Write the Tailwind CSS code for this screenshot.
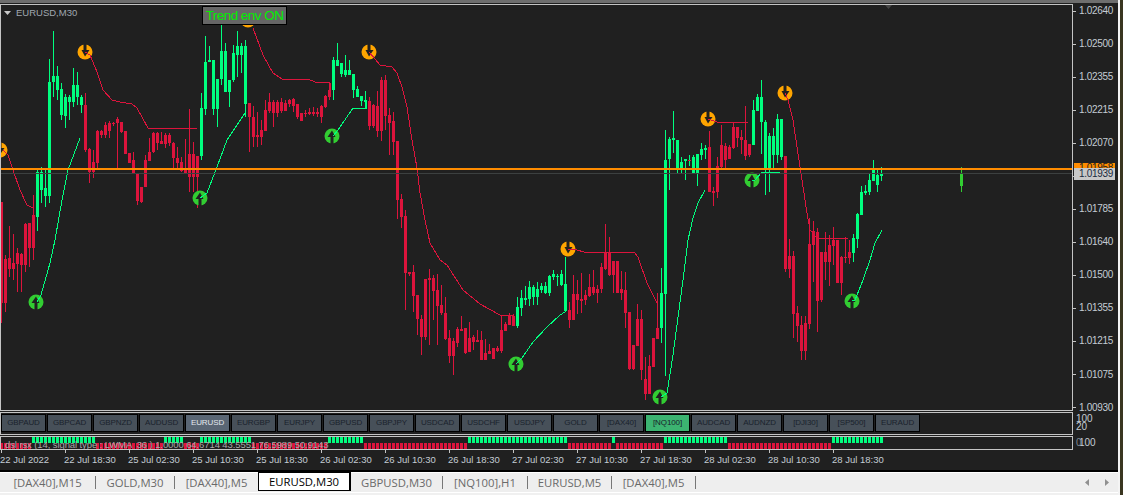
<!DOCTYPE html>
<html>
<head>
<meta charset="utf-8">
<script src="https://cdn.jsdelivr.net/npm/@tailwindcss/browser@4"></script>
</head>
<body class="w-[1123px] h-[495px] overflow-hidden bg-[#3a3620] font-['Liberation_Sans',sans-serif]">
<div class="flex h-[495px]">
  <div class="w-[1118px] flex flex-col">
    <div class="h-[3px] bg-[#6e6e6e]"></div>
    <div class="h-[467px] bg-[#202020] flex flex-col pt-px">
      <!-- main pane + price axis -->
      <div class="flex h-[407px]">
        <div class="relative w-[1073px] h-[407px] border border-[#c4c4c4] overflow-hidden">
          <svg class="block w-[1071px] h-[405px]" viewBox="1 5 1071 405" fill="none">
            <defs>
              <g id="dn"><circle r="7.5" fill="#ffa500"/><path d="M-1.5-8h3v6h3L0 4.500-3.500-2h2z" fill="#202020"/></g>
              <g id="up"><circle r="7.500" fill="#32cd32"/><path d="M-1.500 8v-7h-3L0-5.500 3.500 1h-2v7z" fill="#202020"/></g>
            </defs>
            <!-- green wicks -->
            <path shape-rendering="crispEdges" stroke="#00ff7f" d="M37.500 168V231M41.500 167V203M45.500 168V207M49.500 59V203M53.500 31V97M57.500 66V100M61.500 83V120M65.500 94V128M69.500 95V120M73.500 68V107M77.500 72V105M81.500 95V113M201.500 93V160M205.500 36V115M209.500 46V62M213.500 60V115M217.500 79V127M221.500 25V85M225.500 43V92M229.500 80V107M233.500 45V82M237.500 31V77M241.500 43V73M245.500 40V117M333.500 57V100M337.500 43V66M341.500 63V77M345.500 55V77M349.500 60V75M353.500 74V98M357.500 86V97M361.500 96V106M365.500 91V108M517.500 297V328M521.500 290V316M525.500 286V305M529.500 281V306M533.500 285V305M537.500 282V305M541.500 283V293M545.500 282V294M549.500 275V296M553.500 270V280M557.500 274V286M561.500 270V286M565.500 257V312M661.500 268V343M665.500 130V376M669.500 137V190M673.500 111V153M677.500 140V173M681.500 157V173M685.500 159V180M689.500 155V166M693.500 155V173M697.500 154V186M701.500 143V160M705.500 145V159M753.500 100V145M757.500 94V111M761.500 80V154M765.500 120V195M769.500 133V192M773.500 128V169M777.500 114V163M781.500 119V160M853.500 234V262M857.500 213V248M861.500 186V215M865.500 185V195M869.500 174V195M873.500 160V181M877.500 170V192M881.500 167V181"/>
            <!-- green bodies -->
            <path shape-rendering="crispEdges" stroke="#00ff7f" stroke-width="3" d="M37.500 172V217M41.500 172V190M45.500 188V196M49.500 82V196M53.500 76V82M57.500 76V90M61.500 89V115M65.500 97V116M69.500 97V102M73.500 85V102M77.500 85V97M81.500 97V105M201.500 108V156M205.500 62V109M209.500 60V62M213.500 60V109M217.500 79V109M221.500 51V79M225.500 51V92M229.500 80V92M233.500 53V80M237.500 46V55M241.500 46V55M245.500 46V104M333.500 60V90M337.500 60V66M341.500 63V74M345.500 70V75M349.500 70V75M353.500 74V90M357.500 89V97M361.500 96V101M365.500 100V102M517.500 307V326M521.500 298V308M525.500 298V300M529.500 287V299M533.500 287V297M537.500 289V297M541.500 286V290M545.500 286V293M549.500 276V293M553.500 274V277M557.500 276V277M561.500 274V285M565.500 284V311M661.500 293V328M665.500 160V294M669.500 139V159M673.500 138V140M677.500 140V169M681.500 162V169M685.500 159V161M693.500 157V173M697.500 154V173M701.500 149V155M705.500 148V150M753.500 110V145M757.500 97V111M761.500 97V122M765.500 122V170M769.500 136V170M773.500 136V155M777.500 119V155M781.500 119V157M853.500 238V253M857.500 214V239M861.500 192V215M865.500 191V193M869.500 180V192M873.500 168V181M877.500 175V185M881.500 173V176"/>
            <!-- red wicks -->
            <path shape-rendering="crispEdges" stroke="#dc143c" d="M1.500 202V323M5.500 255V312M9.500 226V277M13.500 234V280M17.500 248V292M21.500 253V292M25.500 223V272M29.500 223V267M33.500 195V260M85.500 93V152M89.500 148V183M93.500 150V178M97.500 130V170M101.500 130V138M105.500 122V138M109.500 121V138M113.500 122V126M117.500 117V168M121.500 122V133M125.500 131V154M129.500 153V163M133.500 152V174M137.500 173V205M141.500 187V203M145.500 155V187M149.500 138V161M153.500 132V153M157.500 132V150M161.500 132V144M165.500 133V148M169.500 133V146M173.500 142V169M177.500 147V168M181.500 157V172M185.500 139V173M189.500 109V192M193.500 142V192M197.500 156V208M249.500 103V152M253.500 106V147M257.500 112V147M261.500 120V145M265.500 100V131M269.500 93V113M273.500 100V127M277.500 100V117M281.500 98V113M285.500 100V111M289.500 99V107M293.500 98V112M297.500 104V119M301.500 113V121M305.500 110V117M309.500 108V115M313.500 107V116M317.500 108V117M321.500 105V123M325.500 95V108M329.500 82V100M369.500 97V130M373.500 104V128M377.500 91V137M381.500 77V141M385.500 75V130M389.500 108V155M393.500 112V155M397.500 141V219M401.500 194V228M405.500 210V310M409.500 272V276M413.500 265V312M417.500 295V335M421.500 315V355M425.500 279V340M429.500 269V345M433.500 275V320M437.500 274V345M441.500 285V315M445.500 297V340M449.500 330V363M453.500 338V375M457.500 327V347M461.500 316V331M465.500 328V354M469.500 322V352M473.500 335V350M477.500 330V342M481.500 331V360M485.500 339V360M489.500 344V354M493.500 348V359M497.500 346V352M501.500 315V353M505.500 322V331M509.500 313V325M513.500 314V326M569.500 302V328M573.500 275V320M577.500 280V314M581.500 273V313M585.500 290V305M589.500 274V297M593.500 270V295M597.500 285V303M601.500 263V293M605.500 224V270M609.500 237V276M613.500 261V293M617.500 261V293M621.500 271V300M625.500 272V328M629.500 312V370M633.500 345V370M637.500 304V346M641.500 310V380M645.500 357V400M649.500 355V394M653.500 338V367M657.500 293V339M709.500 131V192M713.500 187V206M717.500 157V198M721.500 125V170M725.500 143V169M729.500 145V159M733.500 122V149M737.500 127V147M741.500 130V154M745.500 106V160M749.500 144V157M785.500 156V272M789.500 239V278M793.500 251V338M797.500 306V342M801.500 316V360M805.500 316V360M809.500 218V329M813.500 221V282M817.500 228V332M821.500 252V302M825.500 232V280M829.500 235V286M833.500 227V265M837.500 240V283M841.500 256V295M845.500 237V263M849.500 240V264"/>
            <!-- red bodies -->
            <path shape-rendering="crispEdges" stroke="#dc143c" stroke-width="3" d="M1.500 202V303M5.500 259V303M9.500 258V269M13.500 263V269M17.500 253V264M21.500 254V265M25.500 224V265M29.500 223V248M33.500 215V248M85.500 105V150M89.500 149V172M93.500 162V172M97.500 131V163M101.500 131V135M105.500 125V135M109.500 123V131M113.500 123V124M117.500 119V123M121.500 122V132M125.500 131V154M129.500 153V163M133.500 160V174M137.500 173V201M141.500 187V202M145.500 160V187M149.500 152V161M153.500 133V152M157.500 133V143M161.500 141V144M165.500 135V144M169.500 135V143M173.500 143V158M177.500 158V163M181.500 162V171M185.500 168V173M189.500 154V177M193.500 154V177M197.500 156V177M249.500 103V117M253.500 117V137M257.500 135V137M261.500 130V137M265.500 110V131M269.500 102V111M273.500 102V113M277.500 102V113M281.500 102V111M285.500 103V111M289.500 100V104M293.500 99V106M297.500 104V117M301.500 113V121M305.500 113V114M309.500 112V114M313.500 112V114M317.500 112V114M321.500 106V117M325.500 96V107M329.500 90V97M369.500 101V126M373.500 105V126M377.500 106V131M381.500 80V131M385.500 80V116M389.500 115V123M393.500 121V142M397.500 141V200M401.500 199V217M405.500 216V273M409.500 272V274M413.500 272V296M417.500 295V319M421.500 319V337M425.500 279V337M429.500 278V280M433.500 278V291M437.500 290V306M441.500 305V313M445.500 313V339M449.500 338V356M453.500 341V356M457.500 329V343M461.500 329V331M465.500 328V353M469.500 338V352M473.500 337V342M477.500 340V342M481.500 340V360M485.500 353V360M489.500 351V354M493.500 348V359M497.500 348V351M501.500 330V351M505.500 324V331M509.500 315V325M513.500 316V326M569.500 310V320M573.500 294V320M577.500 294V300M581.500 299V301M585.500 295V300M589.500 287V296M593.500 287V293M597.500 289V293M601.500 267V289M605.500 253V269M609.500 253V275M613.500 261V275M617.500 261V293M621.500 289V293M625.500 290V313M629.500 312V369M633.500 345V369M637.500 319V346M641.500 319V370M645.500 379V394M649.500 366V394M653.500 338V367M657.500 328V339M689.500 160V161M709.500 147V192M713.500 191V193M717.500 166V192M721.500 145V167M725.500 146V160M729.500 147V159M733.500 127V148M737.500 127V138M741.500 137V140M745.500 140V156M749.500 144V155M785.500 156V269M789.500 256V269M793.500 256V314M797.500 313V326M801.500 325V351M805.500 323V351M809.500 244V324M813.500 231V245M817.500 232V301M821.500 252V300M825.500 252V262M829.500 245V262M833.500 240V246M837.500 240V283M841.500 257V283M845.500 257V258M849.500 252V258"/>
            <!-- arrows -->
            <use href="#dn" x="85" y="52"/><use href="#dn" x="369" y="52"/><use href="#dn" x="708" y="119"/><use href="#dn" x="785" y="93"/><use href="#dn" x="568" y="249"/><use href="#dn" x="0" y="150"/><use href="#dn" x="248" y="20"/>
            <use href="#up" x="36" y="302"/><use href="#up" x="200" y="198"/><use href="#up" x="332" y="136"/><use href="#up" x="516" y="364"/><use href="#up" x="660" y="397"/><use href="#up" x="752" y="180"/><use href="#up" x="852" y="301"/>
            <!-- trailing lines -->
            <g stroke="#dc143c" stroke-width="1" shape-rendering="crispEdges">
              <path d="M3 150L8 155L13 170L20 190L27 205L33 208"/>
              <path d="M85 52L90 55L97 72L103 90L112 100L120 102L132 104L137 108L148 128H197"/>
              <path d="M253 28L263 55L273 73L282 79H308L315 82L330 83V90"/>
              <path d="M369 52L375 59L380 65L392 67L397 73L402 87L407 107L412 140L417 168L420 193L425 220L430 243L440 260L447 265L463 290L480 304L500 315H513"/>
              <path d="M568 249L577 250L584 252H634L638 257L647 283L657 303"/>
              <path d="M708 119L717 122H748"/>
              <path d="M785 93L788 100L793 120L800 167L807 213L810 230L817 238H848"/>
            </g>
            <g stroke="#00ff7f" stroke-width="1" shape-rendering="crispEdges">
              <path d="M37 302L41 295L50 263L55 240L62 200L68 170L80 138"/>
              <path d="M200 198L207 193L217 167L227 140L245 113"/>
              <path d="M333 136L338 130L353 108H366V100"/>
              <path d="M516 364L522 358L533 342L547 327L560 315L565 312"/>
              <path d="M661 397L667 393L673 355L683 280L688 240L693 218L698 203L705 190"/>
              <path d="M752 180L755 180L762 172H780"/>
              <path d="M852 301L855 300L863 280L870 260L875 243L882 230"/>
            </g>
            <!-- future candle and shift marker -->
            <path shape-rendering="crispEdges" stroke="#32cd32" d="M961.500 167V192"/>
            <path shape-rendering="crispEdges" stroke="#32cd32" stroke-width="3" d="M961.500 173V186"/>
            <path d="M885 5H892L888.500 9z" fill="#444"/>
          </svg>
          <div class="absolute left-0 right-0 top-[163px] h-[2px] bg-[#ff8c00]"></div>
          <div class="absolute left-0 right-0 top-[168px] h-px bg-[#3c4040]"></div>
          <div class="absolute left-[3px] top-[3px] flex items-center gap-[5px]">
            <svg class="w-[7px] h-[4px]" viewBox="0 0 7 4"><path d="M0 0H7L3.500 4z" fill="#c8c8c8"/></svg>
            <span class="text-[9.500px] leading-none text-[#a0a8b0]">EURUSD,M30</span>
          </div>
          <div class="absolute left-[201px] top-[1px] w-[85px] h-[19px] bg-[#666666] border border-black flex items-center justify-center text-[13.500px] tracking-[-0.550px] whitespace-nowrap text-[#00f000] leading-none">Trend env ON</div>
        </div>
        <div class="relative flex-1 flex flex-col gap-[21.050px] pt-px text-[10px] tracking-[-0.3px] leading-[12px] text-[#c4ccd4]">
          <div class="flex items-center h-3"><span class="w-[3px] h-px bg-[#c4c4c4] mr-[3px]"></span>1.02640</div>
          <div class="flex items-center h-3"><span class="w-[3px] h-px bg-[#c4c4c4] mr-[3px]"></span>1.02500</div>
          <div class="flex items-center h-3"><span class="w-[3px] h-px bg-[#c4c4c4] mr-[3px]"></span>1.02355</div>
          <div class="flex items-center h-3"><span class="w-[3px] h-px bg-[#c4c4c4] mr-[3px]"></span>1.02215</div>
          <div class="flex items-center h-3"><span class="w-[3px] h-px bg-[#c4c4c4] mr-[3px]"></span>1.02070</div>
          <div class="flex items-center h-3"><span class="w-[3px] h-px bg-[#c4c4c4] mr-[3px]"></span>1.01925</div>
          <div class="flex items-center h-3"><span class="w-[3px] h-px bg-[#c4c4c4] mr-[3px]"></span>1.01785</div>
          <div class="flex items-center h-3"><span class="w-[3px] h-px bg-[#c4c4c4] mr-[3px]"></span>1.01640</div>
          <div class="flex items-center h-3"><span class="w-[3px] h-px bg-[#c4c4c4] mr-[3px]"></span>1.01500</div>
          <div class="flex items-center h-3"><span class="w-[3px] h-px bg-[#c4c4c4] mr-[3px]"></span>1.01355</div>
          <div class="flex items-center h-3"><span class="w-[3px] h-px bg-[#c4c4c4] mr-[3px]"></span>1.01215</div>
          <div class="flex items-center h-3"><span class="w-[3px] h-px bg-[#c4c4c4] mr-[3px]"></span>1.01075</div>
          <div class="flex items-center h-3"><span class="w-[3px] h-px bg-[#c4c4c4] mr-[3px]"></span>1.00930</div>
          <div class="absolute left-px top-[159px] w-[41px] h-[5px] bg-[#ff8c00] text-[#202020] pl-[5px] overflow-hidden leading-[10px]">1.01958</div>
          <div class="absolute left-px top-[164px] w-[41px] h-[12px] bg-[#c8c8c8] text-[#1a2a40] pl-[5px] leading-[12px]">1.01939</div>
        </div>
      </div>
      <!-- button pane -->
      <div class="flex h-[23px] mt-px">
        <div class="w-[1073px] h-[23px] border border-[#c4c4c4] flex gap-px pt-px text-[8px] leading-none tracking-[-0.1px] text-[#1a222c]">
          <div class="w-[45px] h-[18px] shrink-0 flex items-center justify-center bg-[#475059] border border-black">GBPAUD</div>
          <div class="w-[45px] h-[18px] shrink-0 flex items-center justify-center bg-[#475059] border border-black">GBPCAD</div>
          <div class="w-[45px] h-[18px] shrink-0 flex items-center justify-center bg-[#475059] border border-black">GBPNZD</div>
          <div class="w-[45px] h-[18px] shrink-0 flex items-center justify-center bg-[#475059] border border-black">AUDUSD</div>
          <div class="w-[45px] h-[18px] shrink-0 flex items-center justify-center bg-[#5a6674] border border-black text-[#e4e8ee]">EURUSD</div>
          <div class="w-[45px] h-[18px] shrink-0 flex items-center justify-center bg-[#475059] border border-black">EURGBP</div>
          <div class="w-[45px] h-[18px] shrink-0 flex items-center justify-center bg-[#475059] border border-black">EURJPY</div>
          <div class="w-[45px] h-[18px] shrink-0 flex items-center justify-center bg-[#475059] border border-black">GBPUSD</div>
          <div class="w-[45px] h-[18px] shrink-0 flex items-center justify-center bg-[#475059] border border-black">GBPJPY</div>
          <div class="w-[45px] h-[18px] shrink-0 flex items-center justify-center bg-[#475059] border border-black">USDCAD</div>
          <div class="w-[45px] h-[18px] shrink-0 flex items-center justify-center bg-[#475059] border border-black">USDCHF</div>
          <div class="w-[45px] h-[18px] shrink-0 flex items-center justify-center bg-[#475059] border border-black">USDJPY</div>
          <div class="w-[45px] h-[18px] shrink-0 flex items-center justify-center bg-[#475059] border border-black">GOLD</div>
          <div class="w-[45px] h-[18px] shrink-0 flex items-center justify-center bg-[#475059] border border-black">[DAX40]</div>
          <div class="w-[45px] h-[18px] shrink-0 flex items-center justify-center bg-[#3cb371] border border-black">[NQ100]</div>
          <div class="w-[45px] h-[18px] shrink-0 flex items-center justify-center bg-[#475059] border border-black">AUDCAD</div>
          <div class="w-[45px] h-[18px] shrink-0 flex items-center justify-center bg-[#475059] border border-black">AUDNZD</div>
          <div class="w-[45px] h-[18px] shrink-0 flex items-center justify-center bg-[#475059] border border-black">[DJI30]</div>
          <div class="w-[45px] h-[18px] shrink-0 flex items-center justify-center bg-[#475059] border border-black">[SP500]</div>
          <div class="w-[45px] h-[18px] shrink-0 flex items-center justify-center bg-[#475059] border border-black">EURAUD</div>
        </div>
        <div class="relative flex-1 pl-[3px] text-[10px] leading-[8px] text-[#c4ccd4] pt-[3px]">
          <div>100</div>
          <div>20</div>
        </div>
      </div>
      <!-- indicator pane -->
      <div class="flex h-[14px] mt-px">
        <div class="relative w-[1073px] h-[14px] border border-[#c4c4c4] overflow-hidden">
          <svg class="block w-[1071px] h-[12px]" viewBox="1 437 1071 12" fill="none" shape-rendering="crispEdges">
            <path stroke="#00ff7f" stroke-width="6" stroke-dasharray="3 1" d="M32 440H96M164 440H184M200 440H252M328 440H364M468 440H568M612 440H616M664 440H728M832 440H884"/>
            <path stroke="#dc143c" stroke-width="6" stroke-dasharray="3 1" d="M0 446H32M96 446H164M184 446H200M252 446H328M364 446H468M568 446H612M616 446H664M728 446H832"/>
          </svg>
          <div class="absolute left-[4px] top-[3px] text-[9.500px] tracking-[-0.1px] leading-[10px] whitespace-pre text-[#a8a8a8]">dsl rsx (14, signal type : LWMA  36 ) 1.0000 64.6714 43.5551 76.5989 50.9143</div>
        </div>
        <div class="relative flex-1 pl-[6px] text-[10px] leading-[14px] text-[#c4ccd4]">
          <span class="absolute left-[3px] top-0 text-[#808890]">0</span>
          <span>100</span>
        </div>
      </div>
      <!-- time axis -->
      <div class="flex pl-px text-[9.500px] leading-none text-[#c4ccd4]">
        <div class="w-[64px] shrink-0"><div class="w-px h-[3px] bg-[#c4c4c4]"></div><div class="mt-[2px] -ml-px">22 Jul 2022</div></div>
        <div class="w-[64px] shrink-0"><div class="w-px h-[3px] bg-[#c4c4c4]"></div><div class="mt-[2px] -ml-px">22 Jul 18:30</div></div>
        <div class="w-[64px] shrink-0"><div class="w-px h-[3px] bg-[#c4c4c4]"></div><div class="mt-[2px] -ml-px">25 Jul 02:30</div></div>
        <div class="w-[64px] shrink-0"><div class="w-px h-[3px] bg-[#c4c4c4]"></div><div class="mt-[2px] -ml-px">25 Jul 10:30</div></div>
        <div class="w-[64px] shrink-0"><div class="w-px h-[3px] bg-[#c4c4c4]"></div><div class="mt-[2px] -ml-px">25 Jul 18:30</div></div>
        <div class="w-[64px] shrink-0"><div class="w-px h-[3px] bg-[#c4c4c4]"></div><div class="mt-[2px] -ml-px">26 Jul 02:30</div></div>
        <div class="w-[64px] shrink-0"><div class="w-px h-[3px] bg-[#c4c4c4]"></div><div class="mt-[2px] -ml-px">26 Jul 10:30</div></div>
        <div class="w-[64px] shrink-0"><div class="w-px h-[3px] bg-[#c4c4c4]"></div><div class="mt-[2px] -ml-px">26 Jul 18:30</div></div>
        <div class="w-[64px] shrink-0"><div class="w-px h-[3px] bg-[#c4c4c4]"></div><div class="mt-[2px] -ml-px">27 Jul 02:30</div></div>
        <div class="w-[64px] shrink-0"><div class="w-px h-[3px] bg-[#c4c4c4]"></div><div class="mt-[2px] -ml-px">27 Jul 10:30</div></div>
        <div class="w-[64px] shrink-0"><div class="w-px h-[3px] bg-[#c4c4c4]"></div><div class="mt-[2px] -ml-px">27 Jul 18:30</div></div>
        <div class="w-[64px] shrink-0"><div class="w-px h-[3px] bg-[#c4c4c4]"></div><div class="mt-[2px] -ml-px">28 Jul 02:30</div></div>
        <div class="w-[64px] shrink-0"><div class="w-px h-[3px] bg-[#c4c4c4]"></div><div class="mt-[2px] -ml-px">28 Jul 10:30</div></div>
        <div class="w-[64px] shrink-0"><div class="w-px h-[3px] bg-[#c4c4c4]"></div><div class="mt-[2px] -ml-px">28 Jul 18:30</div></div>
      </div>
    </div>
    <div class="h-[2px] bg-black"></div>
    <!-- tabs -->
    <div class="relative h-[20px] border-t border-white bg-[#eeeeee] flex items-center font-['Open_Sans',sans-serif] text-[11.300px] leading-none text-[#6a6a6a]">
      <div class="w-[95px] text-center">[DAX40],M15</div><div class="w-px h-[13px] bg-[#777777]"></div>
      <div class="w-[78px] text-center">GOLD,M30</div><div class="w-px h-[13px] bg-[#777777]"></div>
      <div class="w-[83px] text-center">[DAX40],M5</div>
      <div class="w-[93px] h-[19px] -mt-[2px] bg-white border-t border-l border-b border-r-2 border-black text-black flex items-center justify-center">EURUSD,M30</div>
      <div class="w-[91px] text-center">GBPUSD,M30</div><div class="w-px h-[13px] bg-[#777777]"></div>
      <div class="w-[84px] text-center">[NQ100],H1</div><div class="w-px h-[13px] bg-[#777777]"></div>
      <div class="w-[83px] text-center">EURUSD,M5</div><div class="w-px h-[13px] bg-[#777777]"></div>
      <div class="w-[83px] text-center">[DAX40],M5</div><div class="w-px h-[13px] bg-[#777777]"></div>
      <div class="ml-auto mr-[9px] flex gap-[14px]">
        <svg class="w-[5px] h-[7px]" viewBox="0 0 5 7"><path d="M4 0V7L0 3.500z" fill="#909090"/></svg>
        <svg class="w-[5px] h-[7px]" viewBox="0 0 5 7"><path d="M1 0V7L5 3.500z" fill="#909090"/></svg>
      </div>
    </div>
    <div class="h-[3px] border-t border-white bg-[#f0f0f0]"></div>
  </div>
  <div class="w-[2px] bg-[#f4f4f4]"></div>
</div>
</body>
</html>
